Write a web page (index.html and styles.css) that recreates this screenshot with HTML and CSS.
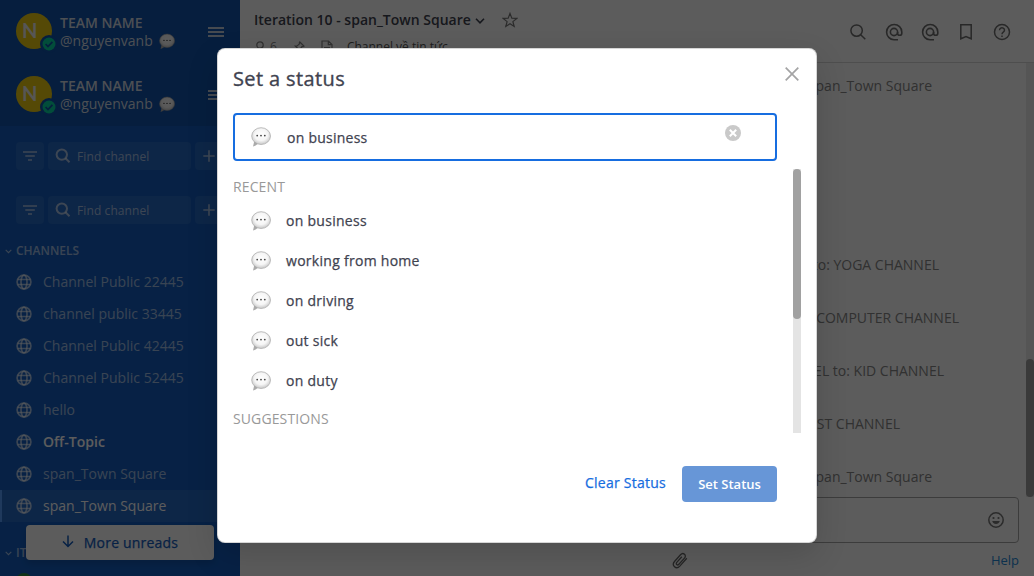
FILE: index.html
```html
<!DOCTYPE html>
<html lang="en">
<head>
<meta charset="utf-8">
<title>Set a status</title>
<link rel="stylesheet" href="styles.css">
</head>
<body>
<svg class="defs" width="0" height="0">
  <defs>
    <radialGradient id="bubbleFill" cx="50%" cy="42%" r="58%">
      <stop offset="0" stop-color="#fff"/><stop offset=".6" stop-color="#f5f5f5"/><stop offset="1" stop-color="#c6c6c6"/>
    </radialGradient>
  </defs>
  <symbol id="bubble" viewBox="0 0 20 20">
    <path d="M3.2 14.5 2 19.4c2-.4 4-1.6 5-3z" fill="#aaa"/>
    <ellipse cx="10.1" cy="9.1" rx="9.4" ry="8.4" fill="url(#bubbleFill)" stroke="#a6a6a6" stroke-width=".7"/>
    <g fill="#444"><circle cx="6.2" cy="8.6" r=".9"/><circle cx="10" cy="8.6" r=".9"/><circle cx="13.8" cy="8.6" r=".9"/></g>
  </symbol>
  <symbol id="globe" viewBox="0 0 16 16">
    <g fill="none" stroke="currentColor" stroke-width="1.7"><circle cx="8" cy="8" r="6.9"/><ellipse cx="8" cy="8" rx="3" ry="6.9"/><path d="M1.5 5.500h13M1.5 10.500h13"/></g>
  </symbol>
  <symbol id="search" viewBox="0 0 16 16">
    <g fill="none" stroke="currentColor" stroke-width="2"><circle cx="6.800" cy="6.600" r="5.200"/><path d="m10.500 10.300 4 4"/></g>
  </symbol>
  <symbol id="at" viewBox="0 0 18 18">
    <g fill="none" stroke="currentColor" stroke-width="1.6"><circle cx="9" cy="9" r="3.6"/><path d="M12.6 9v1.200a2.100 2.100 0 0 0 4.200 0V9A7.600 7.600 0 1 0 9 16.700h4"/></g>
  </symbol>
  <symbol id="filter" viewBox="0 0 14 10"><path d="M0 1h14M2.300 5h9.500M5 9h4" stroke="currentColor" stroke-width="1.5"/></symbol>
  <symbol id="plus" viewBox="0 0 12 12"><path d="M6 .3v11.400M.3 6h11.400" stroke="currentColor" stroke-width="1.6"/></symbol>
  <symbol id="chev" viewBox="0 0 10 6"><path d="m1 .8 4 4 4-4" fill="none" stroke="currentColor" stroke-width="1.6"/></symbol>
</svg>

<div class="app">
  <aside class="sidebar">
    <header class="team">
      <div class="avatar">N<span class="online"><svg viewBox="0 0 14 14" width="14" height="14"><circle cx="7" cy="7" r="6.5" fill="#06d6a0"/><path d="m3.6 7 2.4 2.5 4.4-4.6" fill="none" stroke="#1153ab" stroke-width="1.8"/></svg></span></div>
      <div class="who"><b>TEAM NAME</b><div class="handle">@nguyenvanb<svg width="16" height="17"><use href="#bubble"/></svg></div></div>
      <div class="burger"><i></i><i></i><i></i></div>
    </header>
    <header class="team">
      <div class="avatar">N<span class="online"><svg viewBox="0 0 14 14" width="14" height="14"><circle cx="7" cy="7" r="6.5" fill="#06d6a0"/><path d="m3.6 7 2.4 2.5 4.4-4.6" fill="none" stroke="#1153ab" stroke-width="1.8"/></svg></span></div>
      <div class="who"><b>TEAM NAME</b><div class="handle">@nguyenvanb<svg width="16" height="17"><use href="#bubble"/></svg></div></div>
      <div class="burger"><i></i><i></i><i></i></div>
    </header>
    <div class="finder">
      <span class="box"><svg width="14" height="10"><use href="#filter"/></svg></span>
      <span class="box find"><svg width="16" height="16"><use href="#search"/></svg><span>Find channel</span></span>
      <span class="box"><svg width="12" height="12"><use href="#plus"/></svg></span>
    </div>
    <div class="finder">
      <span class="box"><svg width="14" height="10"><use href="#filter"/></svg></span>
      <span class="box find"><svg width="16" height="16"><use href="#search"/></svg><span>Find channel</span></span>
      <span class="box"><svg width="12" height="12"><use href="#plus"/></svg></span>
    </div>
    <div class="group"><svg width="7" height="5"><use href="#chev"/></svg>CHANNELS</div>
    <ul class="channels">
      <li><svg><use href="#globe"/></svg>Channel Public 22445</li>
      <li><svg><use href="#globe"/></svg>channel public 33445</li>
      <li><svg><use href="#globe"/></svg>Channel Public 42445</li>
      <li><svg><use href="#globe"/></svg>Channel Public 52445</li>
      <li><svg><use href="#globe"/></svg>hello</li>
      <li class="unread"><svg><use href="#globe"/></svg>Off-Topic</li>
      <li><svg><use href="#globe"/></svg>span_Town Square</li>
      <li class="active"><svg><use href="#globe"/></svg>span_Town Square</li>
    </ul>
    <div class="group next"><svg width="7" height="5"><use href="#chev"/></svg>IT</div>
    <div class="peer"></div>
    <div class="unreads"><svg width="12" height="13" viewBox="0 0 12 13"><path d="M6 .5v11M1 6.500l5 5 5-5" fill="none" stroke="currentColor" stroke-width="1.500"/></svg>More unreads</div>
  </aside>

  <main class="main">
    <header class="top">
      <div class="heading">
        <div class="title">Iteration 10 - span_Town Square<svg class="caret" width="10" height="6"><use href="#chev"/></svg>
          <svg class="star" width="16" height="16" viewBox="0 0 16 16"><path d="m8 1.400 1.800 4.700 5 .3-3.900 3.200 1.300 4.900L8 11.800l-4.200 2.700 1.300-4.900L1.200 6.400l5-.3z" fill="none" stroke="currentColor" stroke-width="1.200"/></svg></div>
        <div class="meta">
          <svg width="10" height="13" viewBox="0 0 10 13"><g fill="none" stroke="currentColor" stroke-width="1.300"><circle cx="5" cy="4" r="3.200"/><path d="M3.200 7 .9 9v3h8.200V9L6.800 7"/></g></svg><span class="count">6</span>
          <svg class="pin" width="12" height="12" viewBox="0 0 12 12"><path d="m6.800 1 4.200 4.200-1 .5-1-.2L7.200 8.200v1.700L2.300 5h1.800l2.400-2.100-.2-1zM4.500 7.500 1 11" fill="none" stroke="currentColor" stroke-width="1.200"/></svg>
          <svg class="doc" width="12" height="14" viewBox="0 0 12 14"><path d="M1 1h6.500L11 4.500V13H1zM7.300 1v3.700H11M3 7.500h6M3 10h6" fill="none" stroke="currentColor" stroke-width="1.200"/></svg>
          <span class="about">Channel về tin tức</span>
        </div>
      </div>
      <nav class="tools">
        <svg width="18" height="18" viewBox="0 0 18 18"><g fill="none" stroke="currentColor" stroke-width="1.500"><circle cx="7.600" cy="7.600" r="5.700"/><path d="m11.700 11.700 4.600 4.600"/></g></svg>
        <svg width="18" height="18"><use href="#at"/></svg>
        <svg width="18" height="18"><use href="#at"/></svg>
        <svg width="18" height="18" viewBox="0 0 18 18"><path d="M3.800 1.800h10.400v14L9 13.600l-5.200 2.200z" fill="none" stroke="currentColor" stroke-width="1.500"/></svg>
        <svg width="18" height="18" viewBox="0 0 18 18"><g fill="none" stroke="currentColor" stroke-width="1.500"><circle cx="9" cy="9" r="7.500"/><path d="M6.500 7.200a2.500 2.400 0 1 1 3.800 2C9.300 9.900 9 10.100 9 11.300M9 12.500v1.500"/></g></svg>
      </nav>
    </header>
    <div class="feed">
      <div class="posts">
        <p class="first">span_Town Square</p>
        <p class="yoga">to: YOGA CHANNEL</p>
        <p class="comp">COMPUTER CHANNEL</p>
        <p class="kid">CHANNEL to: KID CHANNEL</p>
        <p class="test">TEST CHANNEL</p>
        <p class="last">span_Town Square</p>
      </div>
      <div class="track"><div class="thumb"></div></div>
    </div>
    <div class="composer"><svg width="16" height="16" viewBox="0 0 16 16"><circle cx="8" cy="8" r="7.200" fill="none" stroke="currentColor" stroke-width="1.500"/><circle cx="5.500" cy="6" r="1.100" fill="currentColor"/><circle cx="10.500" cy="6" r="1.100" fill="currentColor"/><path d="M4.200 9h7.600c-.5 2-2 3-3.800 3s-3.300-1-3.800-3z" fill="currentColor"/></svg></div>
    <footer class="foot"><svg width="16" height="17" viewBox="0 0 16 17"><path d="m14.800 6.300-7 7.800c-1.600 1.700-3.900 1.900-5.300.6-1.500-1.400-1.500-3.500 0-5.200l6-6.700C9.700 1.500 11.400 1.300 12.500 2.300s1.100 2.600 0 3.800l-5.600 6.200c-.7.8-1.600.8-2.200.3s-.6-1.400.1-2.200l5-5.600" fill="none" stroke="currentColor" stroke-width="1.300"/></svg><a>Help</a></footer>
  </main>
</div>

<div class="overlay">
  <section class="modal">
    <div class="modal-head"><h1>Set a status</h1><svg width="14" height="14" viewBox="0 0 14 14"><path d="m.7.7 12.600 12.600M13.300.7.7 13.300" stroke="#a4a4a5" stroke-width="1.700"/></svg></div>
    <div class="field"><svg class="emoji"><use href="#bubble"/></svg><span>on business</span>
      <svg class="clear" width="16" height="16" viewBox="0 0 16 16"><circle cx="8" cy="8" r="8" fill="#c9c9c9"/><path d="m4.800 4.800 6.400 6.400m0-6.400-6.400 6.400" stroke="#fff" stroke-width="2"/></svg></div>
    <div class="options">
      <div class="list">
        <h2>RECENT</h2>
        <div class="row"><svg class="emoji"><use href="#bubble"/></svg>on business</div>
        <div class="row"><svg class="emoji"><use href="#bubble"/></svg>working from home</div>
        <div class="row"><svg class="emoji"><use href="#bubble"/></svg>on driving</div>
        <div class="row"><svg class="emoji"><use href="#bubble"/></svg>out sick</div>
        <div class="row"><svg class="emoji"><use href="#bubble"/></svg>on duty</div>
        <h2 class="sugg">SUGGESTIONS</h2>
      </div>
      <div class="scroll"><div class="grip"></div></div>
    </div>
    <div class="actions"><span class="link">Clear Status</span><span class="primary">Set Status</span></div>
  </section>
</div>
</body>
</html>
```

FILE: styles.css
```css
* { box-sizing: border-box; }
body { margin: 0; width: 1034px; height: 576px; overflow: hidden; font: 14px/20px "Open Sans", sans-serif; color: #3f4350; position: relative; }
svg { display: block; flex: none; }
.defs { position: absolute; }
h1, h2, p, ul { margin: 0; padding: 0; font-weight: 400; }
.app { display: flex; height: 576px; }

.sidebar { position: relative; width: 240px; height: 576px; overflow: hidden; background: #145dbf; color: rgba(255,255,255,.6); flex: none; }
.team { display: flex; height: 63px; padding: 13px 16px 0; background: #1153ab; }
.avatar { position: relative; width: 36px; height: 36px; border-radius: 50%; background: #eccb12; color: #eee; font: 700 20px/35px Lato, sans-serif; padding-left: 6px; }
.online { position: absolute; left: 24px; top: 22px; padding: 2px; border-radius: 50%; background: #1153ab; }
.who { margin-left: 8px; color: #d3dbe6; width: 132px; white-space: nowrap; line-height: 18px; padding-top: 1px; }
.who b { display: block; font-weight: 600; height: 18px; }
.handle { display: flex; gap: 6px; }
.handle svg { margin-top: 1px; }
.burger { width: 16px; margin-left: auto; padding-top: 14px; }
.burger i { display: block; height: 2px; background: #c3cedd; margin-bottom: 2px; }
.burger i + i { margin-top: 2px; }
.finder { display: flex; gap: 4px; padding: 16px 16px 10px; height: 54px; }
.box { display: flex; flex: none; width: 28px; height: 28px; border-radius: 4px; background: rgba(255,255,255,.08); align-items: center; justify-content: center; }
.find { width: 143px; justify-content: flex-start; padding-left: 7px; gap: 6px; font-size: 12px; letter-spacing: .1px; }
.find span { padding-top: 2px; }
.group { display: flex; height: 32px; padding: 2px 0 0 5px; gap: 4px; align-items: center; font-size: 12px; font-weight: 600; }
.channels { list-style: none; }
.channels li { display: flex; height: 32px; align-items: center; gap: 10px; padding-left: 17px; white-space: nowrap; letter-spacing: .02px; }
.channels svg { width: 16px; height: 16px; margin: 0 1px 0 -1px; }
.channels .unread { color: #fff; font-weight: 600; }
.unread svg, .active svg { color: rgba(255,255,255,.6); }
.channels .active { color: #fff; background: rgba(255,255,255,.08); box-shadow: inset 2px 0 #579eff; }
.next { margin-top: 14px; }
.peer { width: 16px; height: 16px; margin: 5px 0 0 16px; border-radius: 50%; background: #2e8b42; }
.unreads { position: absolute; left: 26px; top: 525px; display: flex; width: 188px; height: 35px; border-radius: 4px; background: #fff; color: #145dbf; align-items: center; justify-content: center; gap: 10px; letter-spacing: .2px; -webkit-text-stroke: .25px; box-shadow: 0 4px 6px rgba(0,0,0,.12); }
.unreads svg { margin-top: -3px; }

.main { flex: 1; min-width: 0; display: flex; flex-direction: column; background: #fff; }
.top { display: flex; height: 63px; border-bottom: 1px solid #d8d8d8; padding: 10px 23px 0 14px; justify-content: space-between; }
.title { display: flex; align-items: center; height: 20px; font-weight: 600; white-space: nowrap; }
.caret { margin: 2px 0 0 4px; }
.star { margin-left: 17px; color: #777; }
.meta { display: flex; align-items: center; height: 20px; margin: 7px 0 0 1px; font-size: 12px; color: #888; }
.count { margin-left: 5px; }
.pin { margin-left: 16px; }
.doc { margin-left: 16px; }
.about { margin-left: 14px; color: #555; }
.tools { display: flex; gap: 18px; height: 18px; margin-top: 13px; color: #6f6f6f; }
.feed { display: flex; height: 434px; }
.posts { flex: 1; text-align: right; color: #888; }
.posts p { height: 20px; margin-bottom: 33px; }
.posts .first { margin: 13px 94px 159px 0; }
.posts .yoga { margin-right: 87px; }
.posts .comp { margin-right: 67px; }
.posts .kid { margin-right: 82px; }
.posts .test { margin-right: 126px; }
.posts .last { margin-right: 94px; }
.track { width: 8px; background: #ebebeb; padding-top: 296px; }
.thumb { height: 138px; border-radius: 4px; background: #a0a0a0; }
.composer { display: flex; height: 46px; margin: 0 15px 0 20px; padding-right: 14px; border: 1px solid #a6a6a6; border-radius: 4px; align-items: center; justify-content: flex-end; color: #777; }
.foot { display: flex; justify-content: space-between; align-items: center; margin: 7px 15px 0 432px; height: 22px; color: #666; font-size: 13px; }
.foot svg { margin-top: -1px; }
.foot a { color: #2389d7; margin-top: -2px; }

.overlay { position: absolute; inset: 0; display: flex; justify-content: center; align-items: flex-start; padding-top: 48px; background: rgba(0,0,0,.64); }
.modal { width: 600px; height: 495px; border-radius: 8px; background: #fff; border: 1px solid rgba(0,0,0,.16); box-shadow: 0 12px 32px rgba(0,0,0,.14); padding: 0 15px; color: #3f4350; }
.modal-head { display: flex; height: 64px; padding: 16px 2px 0 0; justify-content: space-between; }
.modal-head svg { margin-top: 2px; }
h1 { font-size: 20px; line-height: 28px; letter-spacing: .38px; -webkit-text-stroke: .35px; }
.field { display: flex; width: 544px; height: 48px; border: 2px solid #166de0; border-radius: 4px; padding: 12px 34px 0 16px; letter-spacing: .25px; -webkit-text-stroke: .25px; }
.field span { margin: 1px 0 0 16px; }
.field .clear { margin: -2px 0 0 auto; }
.emoji { width: 20px; height: 20px; }
svg { -webkit-text-stroke: 0; }
.options { display: flex; height: 264px; margin-top: 8px; overflow: hidden; }
.list { width: 560px; }
h2 { height: 32px; line-height: 36px; font-size: 14px; letter-spacing: .12px; color: #999; }
.row { display: flex; height: 40px; align-items: center; gap: 15px; padding-left: 18px; letter-spacing: .28px; -webkit-text-stroke: .25px; }
.scroll { width: 8px; background: #e4e4e4; }
.grip { height: 150px; border-radius: 4px; background: #a1a1a1; }
.actions { display: flex; justify-content: flex-end; gap: 16px; padding: 33px 24px 0 0; }
.link { line-height: 34px; color: #166de0; letter-spacing: .25px; -webkit-text-stroke: .25px; }
.primary { width: 95px; height: 36px; line-height: 36px; border-radius: 4px; text-align: center; background: #6796d7; color: #fff; font-size: 13px; font-weight: 600; }
```
